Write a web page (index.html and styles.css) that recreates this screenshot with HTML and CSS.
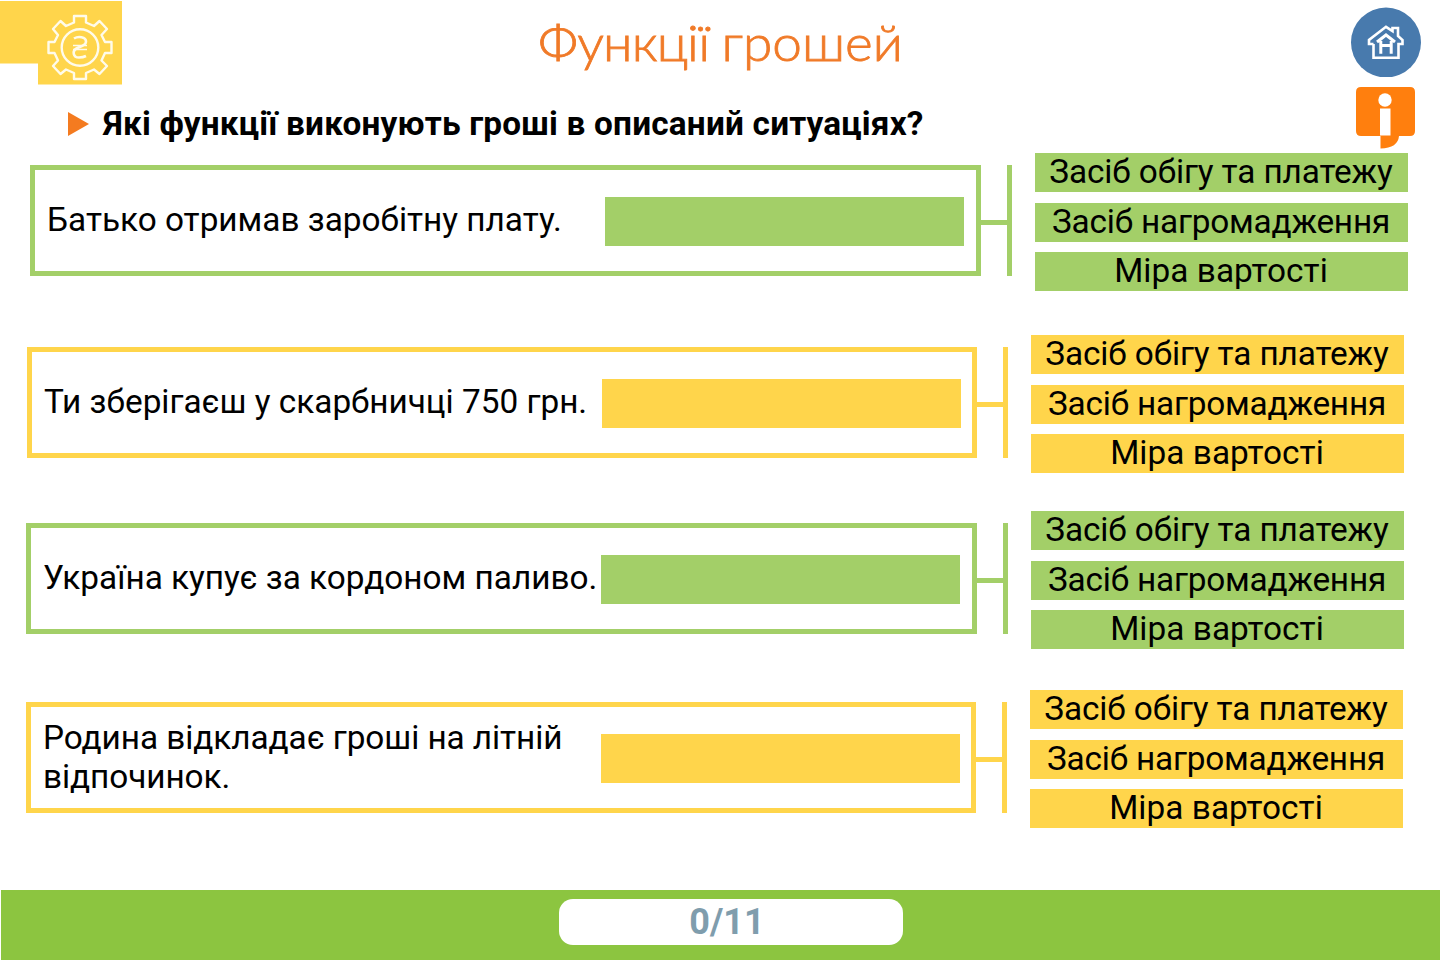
FILE: index.html
```html
<!DOCTYPE html>
<html lang="uk">
<head>
<meta charset="utf-8">
<title>Функції грошей</title>
<link rel="stylesheet" href="styles.css">
</head>
<body>
<main class="page">
  <header class="header">
    <svg class="logo" viewBox="0 0 122 85" width="122" height="85">
      <path fill="#ffd54b" d="M0 1H122V84.500H38V63.500H0Z"/>
      <g fill="none" stroke="#fffbea" stroke-width="2.400" stroke-linejoin="round">
        <path d="M74 16H86V22.500L94 26L99.500 21L107 29L101.500 35L105 42H111.500V53H105L101.500 60.500L107 66L99.500 74L94 69.500L86 73V79H74V73L66 69.500L60.500 74L53 66L58 60.500L54.500 53H48.500V42H54.500L58 35L53 29L60.500 21L66 26L74 22.500Z"/>
        <circle cx="80" cy="47.500" r="18.300"/>
        <path stroke-width="2.600" d="M74 38.500C78 36 86 36.500 86 41.500C86 46 80 46.500 76.500 48.500C72 51 73 57.500 79 57.500C82 57.500 84 57 86 56"/>
        <path stroke-width="1.600" d="M73 45.500H87M73 49.500H87"/>
      </g>
    </svg>
    <div class="heading">
      <h1 class="title"><span class="title-first">Функції</span> грошей</h1>
      <div class="question"><svg class="marker" viewBox="0 0 21 24" width="21" height="24"><path fill="#f47b20" d="M0 0L21 12L0 24Z"/></svg><h2 class="question-text">Які функції виконують гроші в описаний ситуаціях?</h2></div>
    </div>
    <nav class="tools">
      <svg viewBox="0 0 70 70" width="70" height="70">
        <circle cx="35" cy="35.500" r="35" fill="#487aad"/>
        <g fill="none" stroke="#fff">
          <path stroke-width="2.600" d="M22.500 37V50.800H47.500V37H51.500V33L47 29V21H41.500V24L35 19.800L18 33V37H22.500"/>
          <path stroke-width="3" d="M26 35L35 28L44 35M29.800 46.800V34M40.200 46.800V34M29 38.500H41"/>
        </g>
      </svg>
      <svg class="info" viewBox="0 0 59 62" width="59" height="62">
        <path fill="#ff7f0e" d="M5 0H54Q59 0 59 5V44Q59 49 54 49H43Q42 61 24.500 61.500V49H5Q0 49 0 44V5Q0 0 5 0Z"/>
        <circle cx="29" cy="13" r="6.700" fill="#fff"/>
        <path fill="#fff" d="M24 21.500H34.500V48.500H24Z"/>
      </svg>
    </nav>
  </header>

  <section class="row row-1 green">
    <div class="card"><p class="statement">Батько отримав заробітну плату.</p><div class="slot"></div></div>
    <div class="link"></div><div class="bar"></div>
    <div class="options"><div class="option">Засіб обігу та платежу</div><div class="option">Засіб нагромадження</div><div class="option">Міра вартості</div></div>
  </section>
  <section class="row row-2 yellow">
    <div class="card"><p class="statement">Ти зберігаєш у скарбничці 750 грн.</p><div class="slot"></div></div>
    <div class="link"></div><div class="bar"></div>
    <div class="options"><div class="option">Засіб обігу та платежу</div><div class="option">Засіб нагромадження</div><div class="option">Міра вартості</div></div>
  </section>
  <section class="row row-3 green">
    <div class="card"><p class="statement">Україна купує за кордоном паливо.</p><div class="slot"></div></div>
    <div class="link"></div><div class="bar"></div>
    <div class="options"><div class="option">Засіб обігу та платежу</div><div class="option">Засіб нагромадження</div><div class="option">Міра вартості</div></div>
  </section>
  <section class="row row-4 yellow">
    <div class="card"><p class="statement">Родина відкладає гроші на літній<br>відпочинок.</p><div class="slot"></div></div>
    <div class="link"></div><div class="bar"></div>
    <div class="options"><div class="option">Засіб обігу та платежу</div><div class="option">Засіб нагромадження</div><div class="option">Міра вартості</div></div>
  </section>

  <footer class="footer"><div class="score">0/11</div></footer>
</main>
</body>
</html>
```
FILE: styles.css
```css
* { box-sizing: border-box; margin: 0; padding: 0; }
body { background: #fff; color: #000; font-family: Roboto, "Noto Sans", sans-serif; }
.page { width: 1440px; height: 960px; display: flex; flex-direction: column; overflow: hidden; }
.header { height: 153px; display: flex; flex: none; }
.logo, .marker, .tools svg { display: block; flex: none; }
.heading { width: 1229px; flex: none; }
.title { width: 400px; height: 92px; margin-left: 416px; padding-top: 13px; color: #f07a28; font: 300 49px/58px Lato, sans-serif; word-spacing: -2px; -webkit-text-stroke: .8px #f07a28; white-space: nowrap; transform: scaleX(1.085); transform-origin: left; }
.title-first { letter-spacing: -.8px; }
.question { display: flex; align-items: center; height: 64px; margin-left: -54px; gap: 14px; }
.question-text { margin-top: -2px; font-size: 33.33px; line-height: 39px; letter-spacing: .2px; font-weight: 700; white-space: nowrap; }
.tools { padding-top: 7px; }
.info { margin: 10px 0 0 5px; }

.green { --tone: #a3cf68; }
.yellow { --tone: #ffd54b; }
.row { display: flex; flex: none; height: 138px; }
.row-1 { margin-left: 30px; }
.row-2 { margin: 44px 0 0 27px; }
.row-3 { margin: 38px 0 0 26px; }
.row-4 { margin: 41px 0 0 26px; }
.card { display: flex; align-items: center; width: 951px; height: 111px; margin-top: 12px; padding: 0 12px; border: 5px solid var(--tone); }
.row-2 .card, .row-4 .card { width: 950px; padding-right: 11px; }
.statement { width: 558px; flex: none; margin-top: -2px; font-size: 33.33px; line-height: 39px; white-space: nowrap; }
.row-4 .statement { letter-spacing: -.06px; }
.slot { width: 359px; height: 49px; flex: none; margin-top: 2px; background: var(--tone); }
.link { width: 26px; height: 5px; margin-top: 67px; background: var(--tone); }
.bar { width: 5px; height: 111px; margin-top: 12px; background: var(--tone); }
.options { width: 373px; margin-left: 23px; }
.option { height: 39px; margin-bottom: 11px; padding-right: 1px; background: var(--tone); font-size: 33.33px; line-height: 38px; letter-spacing: -.12px; text-align: center; white-space: nowrap; }
.option:nth-child(2) { margin-bottom: 10px; letter-spacing: -.2px; }
.option:nth-child(3) { letter-spacing: .06px; }

.footer { height: 70px; margin: auto 0 0 1px; padding: 9px 0 0 558px; background: #8cc540; flex: none; }
.score { width: 344px; height: 46px; padding-right: 8px; border-radius: 14px; background: #fff; color: #7f9dad; font-size: 36px; line-height: 46px; font-weight: 700; text-align: center; }
```
